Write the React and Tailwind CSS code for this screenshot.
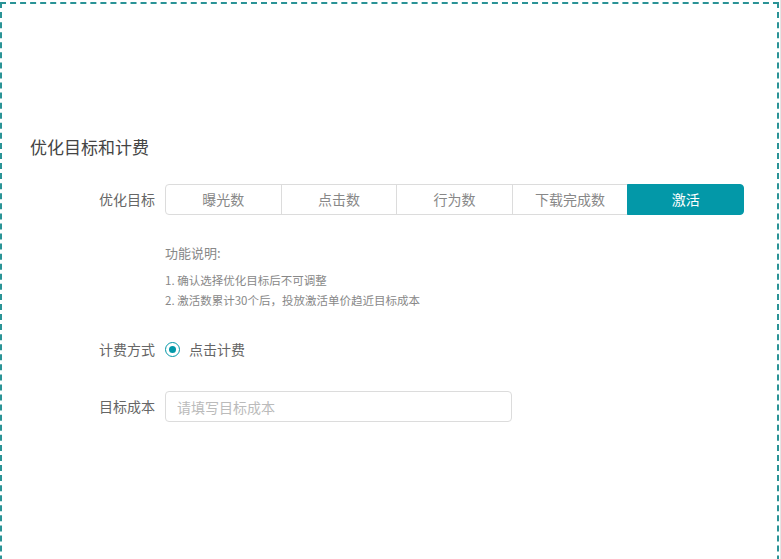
import React, { useState } from 'react'

const targets = ['曝光数', '点击数', '行为数', '下载完成数', '激活']

const font = { fontFamily: '"Noto Sans CJK SC", "Noto Sans", sans-serif' }

function FormRow({ label, children, className = '' }) {
  return (
    <div className={`flex items-center ${className}`}>
      <div className="w-[135px] shrink-0 pr-[10px] text-right text-[14px] text-[#666]">{label}</div>
      {children}
    </div>
  )
}

export default function App() {
  const [active, setActive] = useState(4)
  const [cost, setCost] = useState('')

  return (
    <div className="w-full h-[559px] overflow-hidden bg-white pt-[2px] pr-[1px] border-r border-[#e5e5e5]" style={font}>
      <div className="h-[620px] border-2 border-dashed border-[#2a9396] pl-[28px] pt-[131px]">
        <h2 className="text-[17px] leading-[24px] text-[#444]">优化目标和计费</h2>

        <FormRow label="优化目标" className="mt-[25px]">
          <div className="flex h-[31px] w-[579px]">
            {targets.map((t, i) => (
              <button
                key={t}
                onClick={() => setActive(i)}
                className={`flex-1 text-[14px] border -ml-px first:ml-0 first:rounded-l-[4px] last:rounded-r-[4px] ${
                  active === i
                    ? 'bg-[#0398a8] border-[#0398a8] text-white relative'
                    : 'bg-white border-[#dcdcdc] text-[#888]'
                }`}
              >
                {t}
              </button>
            ))}
          </div>
        </FormRow>

        <div className="ml-[135px] mt-[28px] text-[#888]">
          <div className="text-[13px] leading-[20px]">功能说明:</div>
          <div className="mt-[7px] text-[11.5px] leading-[20px]">
            <div>1. 确认选择优化目标后不可调整</div>
            <div>2. 激活数累计30个后，投放激活单价趋近目标成本</div>
          </div>
        </div>

        <FormRow label="计费方式" className="mt-[29px] h-[20px]">
          <label className="flex items-center gap-[9px] text-[14px] text-[#666]">
            <span className="w-[15px] h-[15px] rounded-full border border-[#0398a8] flex items-center justify-center">
              <span className="w-[7px] h-[7px] rounded-full bg-[#0398a8]" />
            </span>
            点击计费
          </label>
        </FormRow>

        <FormRow label="目标成本" className="mt-[32px]">
          <input
            value={cost}
            onChange={(e) => setCost(e.target.value)}
            placeholder="请填写目标成本"
            className="w-[347px] h-[31px] rounded-[4px] border border-[#dcdcdc] px-[11px] text-[14px] text-[#333] placeholder:text-[#bbb] outline-none"
          />
        </FormRow>
      </div>
    </div>
  )
}
